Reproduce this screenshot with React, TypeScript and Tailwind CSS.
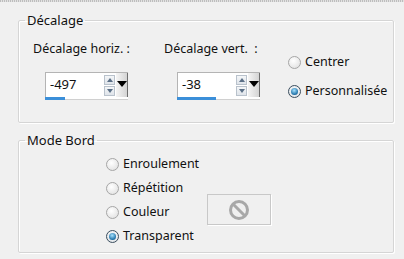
import React from "react";

const font = { fontFamily: '"Noto Sans", "Open Sans", sans-serif' };

function Radio({ checked, label }: { checked?: boolean; label: string }) {
  return (
    <div className="flex items-center h-[24px]">
      <div
        className={
          "w-[13px] h-[13px] rounded-full border flex items-center justify-center " +
          (checked
            ? "border-[#3b4e5e] bg-[radial-gradient(circle_at_50%_40%,#ffffff,#d8dde2)]"
            : "border-[#a6a6a6] bg-[radial-gradient(circle_at_40%_35%,#ffffff,#dcdcdc)]")
        }
      >
        {checked && (
          <div className="w-[7px] h-[7px] rounded-full bg-[radial-gradient(circle_at_45%_35%,#a6e2ff,#1c6fa6_70%,#0e3f66)]" />
        )}
      </div>
      <span className="ml-[4px] text-[12.5px] text-[#111] leading-none">{label}</span>
    </div>
  );
}

function Spin({ value, bar }: { value: string; bar: number }) {
  return (
    <div className="flex flex-col w-[83px]">
      <div className="flex h-[25px] border-t border-l border-[#b4b4b4] bg-white">
        <div className="flex-1 pl-[4px] pt-[3px] text-[13px] text-[#111] leading-[16px]">{value}</div>
        <div className="flex flex-col justify-center gap-[1px] w-[11px] mr-[1px]">
          <div className="h-[10px] border border-[#b9c2cc] bg-[linear-gradient(#f4f6f8,#dfe4ea)] flex items-center justify-center">
            <div className="w-0 h-0 border-l-[3px] border-r-[3px] border-b-[4px] border-l-transparent border-r-transparent border-b-[#5a6f86]" />
          </div>
          <div className="h-[10px] border border-[#b9c2cc] bg-[linear-gradient(#f4f6f8,#dfe4ea)] flex items-center justify-center">
            <div className="w-0 h-0 border-l-[3px] border-r-[3px] border-t-[4px] border-l-transparent border-r-transparent border-t-[#5a6f86]" />
          </div>
        </div>
        <div className="w-[12px] border-r border-[#6e6e6e] bg-[linear-gradient(90deg,#f5f5f5,#d4d4d4)] flex items-start justify-center pt-[8px]">
          <div className="w-0 h-0 border-l-[5px] border-r-[5px] border-t-[6px] border-l-transparent border-r-transparent border-t-[#000]" />
        </div>
      </div>
      <div className="h-[3px] bg-white border-b border-[#d0d0d0] relative">
        <div className="h-[3px] bg-[#3b8fd9]" style={{ width: bar }} />
      </div>
    </div>
  );
}

function Group({ title, children, h }: { title: string; children: React.ReactNode; h: string }) {
  return (
    <fieldset
      className={
        "mx-[18px] w-[376px] border border-[#d5d5d5] rounded-[2px] shadow-[inset_1px_1px_0_#ffffff,1px_1px_0_#ffffff] " +
        h
      }
    >
      <legend className="ml-[6px] px-[2px] text-[13px] text-[#111] leading-[16px]">{title}</legend>
      {children}
    </fieldset>
  );
}

export default function App() {
  return (
    <div className="w-[404px] h-[259px] bg-[#f0f0f0] overflow-hidden" style={font}>
      <div className="h-[2px] bg-[repeating-linear-gradient(90deg,#bdbdbd_0_1px,#e2e2e2_1px_2px)]" />
      <div className="h-[10px]" />
      <Group title="Décalage" h="h-[111px]">
        <div className="flex pl-[14px] pt-[13px]">
          <div className="w-[131px] flex flex-col">
            <div className="text-[12.5px] text-[#111] leading-[16px]">Décalage horiz.&nbsp;:</div>
            <div className="ml-[12px] mt-[15px]">
              <Spin value="-497" bar={20} />
            </div>
          </div>
          <div className="w-[124px] flex flex-col">
            <div className="text-[12.5px] text-[#111] leading-[16px]">Décalage vert.&nbsp;&nbsp;:</div>
            <div className="ml-[13px] mt-[15px]">
              <Spin value="-38" bar={39} />
            </div>
          </div>
          <div className="flex flex-col pt-[9px] gap-[5px]">
            <Radio label="Centrer" />
            <Radio checked label="Personnalisée" />
          </div>
        </div>
      </Group>
      <div className="h-[9px]" />
      <Group title="Mode Bord" h="h-[121px]">
        <div className="flex pl-[87px] pt-[4px]">
          <div className="flex flex-col">
            <Radio label="Enroulement" />
            <Radio label="Répétition" />
            <Radio label="Couleur" />
            <Radio checked label="Transparent" />
          </div>
          <div className="ml-[8px] mt-[42px] w-[64px] h-[31px] border border-[#c8c8c8] shadow-[1px_1px_0_#ffffff] bg-[#f0f0f0] flex items-center justify-center">
            <svg width="22" height="22" viewBox="0 0 22 22">
              <circle cx="11" cy="11" r="8.5" fill="none" stroke="#a8a8a8" strokeWidth="3" />
              <line x1="5" y1="5" x2="17" y2="17" stroke="#a8a8a8" strokeWidth="3" />
            </svg>
          </div>
        </div>
      </Group>
    </div>
  );
}
